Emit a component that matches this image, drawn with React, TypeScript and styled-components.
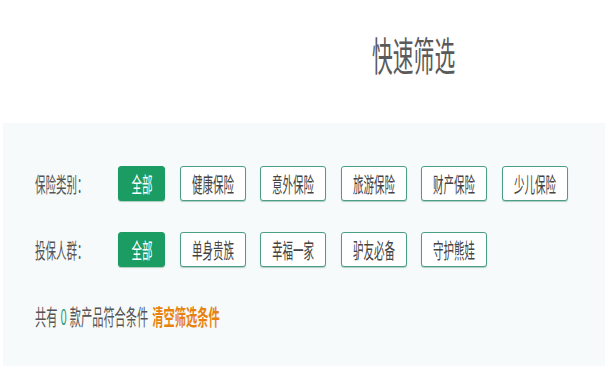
import React from 'react';
import styled, { createGlobalStyle } from 'styled-components';

const GlobalStyle = createGlobalStyle`
  html, body {
    margin: 0;
    padding: 0;
    background: #ffffff;
  }
  body {
    font-family: "Noto Sans CJK SC", "Noto Sans", sans-serif;
  }
`;

// text in the shot is squeezed sideways
const Squeeze = styled.span<{ $origin?: string; $x?: number }>`
  display: inline-block;
  transform: scaleX(${(p) => p.$x || 0.5});
  transform-origin: ${(p) => p.$origin || 'center'};
  white-space: nowrap;
`;

const Header = styled.header`
  height: 123px;
  display: flex;
  align-items: flex-start;
  padding-left: 372px;
  box-sizing: border-box;
`;

const Title = styled.h1`
  margin: 34px 0 0;
  font-size: 40px;
  line-height: 1;
  font-weight: 400;
  color: #5a5a5a;
`;

const Panel = styled.section`
  margin-left: 3px;
  height: 243px;
  background: #f7fafa;
  padding: 43px 0 0 32px;
  box-sizing: border-box;
  display: flex;
  flex-direction: column;
  gap: 31px;
`;

const Row = styled.div`
  display: flex;
  align-items: center;
  height: 35px;
`;

const Label = styled.span`
  width: 83px;
  font-size: 21px;
  line-height: 1;
  color: #555;
`;

const Tags = styled.div`
  display: flex;
  gap: 14.5px;
`;

const Tag = styled.button<{ $active?: boolean }>`
  width: ${(p) => (p.$active ? '47px' : '66px')};
  height: 35px;
  padding: 0;
  display: flex;
  align-items: center;
  justify-content: center;
  font-family: inherit;
  font-size: 21px;
  line-height: 1;
  border-radius: 3px;
  cursor: pointer;
  border: 1px solid ${(p) => (p.$active ? '#1b9c63' : '#4b9e86')};
  background: ${(p) => (p.$active ? '#1b9c63' : '#ffffff')};
  color: ${(p) => (p.$active ? '#ffffff' : '#444')};
  box-shadow: 0 1px 1px rgba(40, 120, 90, 0.35);
`;

const Summary = styled.p`
  margin: 6px 0 0;
  font-size: 22px;
  line-height: 1;
  color: #555;
  display: flex;
  align-items: center;
`;

const Count = styled.span`
  color: #2a9d7a;
  padding: 0 1px;
`;

const Clear = styled.a`
  color: #e8820f;
  font-weight: 700;
  cursor: pointer;
  margin-left: 3px;
`;

const typeList = ['健康保险', '意外保险', '旅游保险', '财产保险', '少儿保险'];
const crowdList = ['单身贵族', '幸福一家', '驴友必备', '守护熊娃'];

const FilterRow = ({ label, list }: { label: string; list: string[] }) => (
  <Row>
    <Label>
      <Squeeze $origin="left">{label}</Squeeze>
    </Label>
    <Tags>
      <Tag $active>
        <Squeeze>全部</Squeeze>
      </Tag>
      {list.map((data) => (
        <Tag key={data}>
          <Squeeze>{data}</Squeeze>
        </Tag>
      ))}
    </Tags>
  </Row>
);

const App = () => {
  return (
    <>
      <GlobalStyle />
      <Header>
        <Title>
          <Squeeze $origin="left" $x={0.52}>快速筛选</Squeeze>
        </Title>
      </Header>
      <Panel>
        <FilterRow label="保险类别：" list={typeList} />
        <FilterRow label="投保人群：" list={crowdList} />
        <Summary>
          <Squeeze $origin="left" $x={0.51}>
            共有 <Count>0</Count> 款产品符合条件 <Clear>清空筛选条件</Clear>
          </Squeeze>
        </Summary>
      </Panel>
    </>
  );
};

export default App;
